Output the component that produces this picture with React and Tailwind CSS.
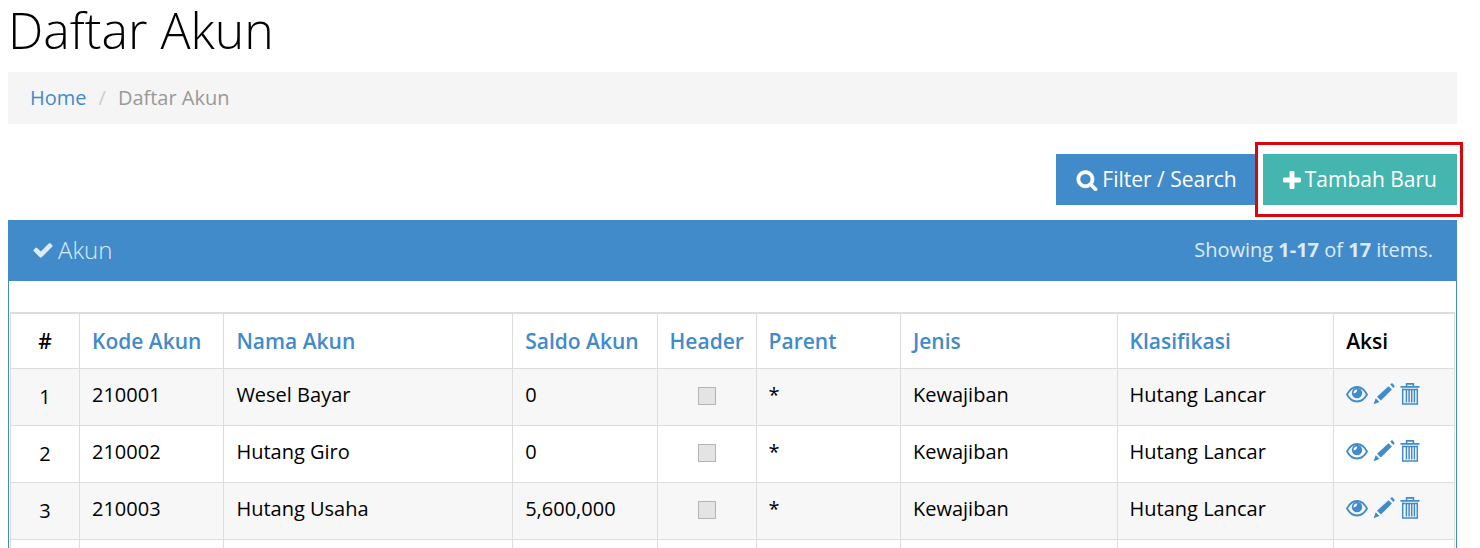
const columns = [
  { key: "kode", label: "Kode Akun" },
  { key: "nama", label: "Nama Akun" },
  { key: "saldo", label: "Saldo Akun" },
  { key: "header", label: "Header" },
  { key: "parent", label: "Parent" },
  { key: "jenis", label: "Jenis" },
  { key: "klasifikasi", label: "Klasifikasi" },
];

const accounts = [
  { kode: "210001", nama: "Wesel Bayar", saldo: "0", parent: "*", jenis: "Kewajiban", klasifikasi: "Hutang Lancar" },
  { kode: "210002", nama: "Hutang Giro", saldo: "0", parent: "*", jenis: "Kewajiban", klasifikasi: "Hutang Lancar" },
  { kode: "210003", nama: "Hutang Usaha", saldo: "5,600,000", parent: "*", jenis: "Kewajiban", klasifikasi: "Hutang Lancar" },
];

export default function App() {
  return (
    <div className="h-screen overflow-hidden bg-white pr-[23px] pl-2 font-['Open_Sans','Noto_Sans',sans-serif] text-xl text-black">
      <h1 className="pb-3 text-[50px] leading-[60px] font-light text-black">Daftar Akun</h1>

      <nav aria-label="Breadcrumb" className="bg-[#f5f5f5] px-[22px] py-3">
        <ol className="flex leading-7">
          <li>
            <a href="#home" className="text-[#428bca]">Home</a>
          </li>
          <li aria-hidden="true" className="px-3 text-[#ccc]">/</li>
          <li className="text-[#999]">Daftar Akun</li>
        </ol>
      </nav>

      <div className="flex justify-end gap-[6px] pt-[30px] pb-[15px]">
        <button type="button" className="flex items-center gap-1 bg-[#428bca] px-5 py-[10px] text-[21px] leading-[31px] text-white">
          <SearchIcon /> Filter / Search
        </button>
        <div className="relative">
          <button type="button" className="flex items-center gap-1 bg-[#45b6af] px-5 py-[10px] text-[21px] leading-[31px] text-white">
            <PlusIcon /> Tambah Baru
          </button>
          <span className="pointer-events-none absolute -inset-y-3 -right-[6px] -left-2 border-3 border-[#d9060c]" />
        </div>
      </div>

      <section className="border border-[#428bca]">
        <header className="flex items-center justify-between bg-[#428bca] px-[23px] pt-[13px] pb-[15px] leading-8 text-[#dcebf8]">
          <h2 className="flex items-center gap-1 text-2xl leading-8 font-light">
            <CheckIcon /> Akun
          </h2>
          <p>
            Showing <b>1-17</b> of <b>17</b> items.
          </p>
        </header>

        <div className="px-px pt-[31px]">
          <table className="w-full table-fixed border-collapse text-left leading-7">
            <colgroup>
              <col className="w-[69px]" />
              <col className="w-[10%]" />
              <col className="w-[20%]" />
              <col className="w-[10%]" />
              <col className="w-[99px]" />
              <col className="w-[10%]" />
              <col className="w-[15%]" />
              <col className="w-[15%]" />
              <col />
            </colgroup>
            <thead className="text-[21px]">
              <tr>
                <th className="border border-t-2 border-[#ddd] py-[13px] text-center font-semibold">#</th>
                {columns.map((column) => (
                  <th key={column.key} className="border border-t-2 border-[#ddd] px-3 py-[13px] font-semibold whitespace-nowrap">
                    <a href={`#${column.key}`} className="text-[#428bca]">{column.label}</a>
                  </th>
                ))}
                <th className="border border-t-2 border-[#ddd] px-3 py-[13px] font-semibold">Aksi</th>
              </tr>
            </thead>
            <tbody>
              {accounts.map((account, idx) => (
                <AccountRow key={account.kode} account={account} number={idx + 1} />
              ))}
              <tr className="h-14">
                {[...Array(9)].map((_, idx) => (
                  <td key={idx} className="border border-[#ddd]" />
                ))}
              </tr>
            </tbody>
          </table>
        </div>
      </section>
    </div>
  );
}

function AccountRow({ account, number }) {
  return (
    <tr className="align-top odd:bg-[#f7f7f7]">
      <td className="border border-[#ddd] py-[14px] text-center">{number}</td>
      <Cell>{account.kode}</Cell>
      <Cell>{account.nama}</Cell>
      <Cell>{account.saldo}</Cell>
      <td className="border border-[#ddd] py-[18px]">
        <input
          type="checkbox"
          disabled
          aria-label={`Header ${account.nama}`}
          className="mx-auto block size-[18px] appearance-none border border-[#b4b4b4] bg-[#e4e4e4]"
        />
      </td>
      <Cell>{account.parent}</Cell>
      <Cell>{account.jenis}</Cell>
      <Cell>{account.klasifikasi}</Cell>
      <td className="border border-[#ddd] px-3 py-[13px] text-[#428bca]">
        <div className="flex gap-[5px]">
          <a href="#view" aria-label={`View ${account.nama}`}><EyeIcon /></a>
          <a href="#update" aria-label={`Update ${account.nama}`}><PencilIcon /></a>
          <a href="#delete" aria-label={`Delete ${account.nama}`}><TrashIcon /></a>
        </div>
      </td>
    </tr>
  );
}

function Cell({ children }) {
  return <td className="border border-[#ddd] px-3 pt-3 pb-4 whitespace-nowrap">{children}</td>;
}

function SearchIcon() {
  return (
    <svg viewBox="0 0 1792 1792" className="size-[22px]" fill="currentColor" stroke="currentColor" strokeWidth="50" aria-hidden="true">
      <path d="M1216 832q0-185-131.5-316.5t-316.5-131.5-316.5 131.5-131.5 316.5 131.5 316.5 316.5 131.5 316.5-131.5 131.5-316.5zm512 832q0 52-38 90t-90 38q-54 0-90-38l-343-342q-179 124-399 124-143 0-273.5-55.5t-225-150-150-225-55.5-273.5 55.5-273.5 150-225 225-150 273.5-55.5 273.5 55.5 225 150 150 225 55.5 273.5q0 220-124 399l343 343q37 37 37 90z" />
    </svg>
  );
}

function PlusIcon() {
  return (
    <svg viewBox="192 128 1408 1408" className="size-[18px]" fill="currentColor" aria-hidden="true">
      <path d="M1600 736v192q0 40-28 68t-68 28h-416v416q0 40-28 68t-68 28h-192q-40 0-68-28t-28-68v-416h-416q-40 0-68-28t-28-68v-192q0-40 28-68t68-28h416v-416q0-40 28-68t68-28h192q40 0 68 28t28 68v416h416q40 0 68 28t28 68z" />
    </svg>
  );
}

function CheckIcon() {
  return (
    <svg viewBox="0 0 1792 1792" className="size-[22px]" fill="currentColor" aria-hidden="true">
      <path d="M1671 566q0 40-28 68l-724 724-136 136q-28 28-68 28t-68-28l-136-136-362-362q-28-28-28-68t28-68l136-136q28-28 68-28t68 28l294 295 656-657q28-28 68-28t68 28l136 136q28 28 28 68z" />
    </svg>
  );
}

function EyeIcon() {
  return (
    <svg viewBox="0 0 22 24" className="h-6 w-[22px]" aria-hidden="true">
      <path d="M1 12.5C3.4 7.800 7 5 11 5s7.600 2.800 10 7.500c-2.400 4.400-6 7-10 7S3.400 16.900 1 12.500Z" fill="none" stroke="currentColor" strokeWidth="1.800" />
      <circle cx="11" cy="11" r="5.200" fill="currentColor" />
      <path d="M7.400 11.200c.1-2.300 1.500-3.700 3.900-3.800-.2 2.400-1.400 3.700-3.900 3.800Z" fill="#fff" />
    </svg>
  );
}

function PencilIcon() {
  return (
    <svg viewBox="0 0 22 24" className="h-6 w-[22px]" fill="currentColor" aria-hidden="true">
      <path d="M17.200 2.600l1.200-1.100c.5-.3 1-.2 1.400.2l1.500 1.700c.4.4.4 1 .1 1.400l-1 1.200ZM15.500 4.200l3.400 3.400L7.900 18.600l-3.900-3.900ZM2.700 16.300l3.800 3.800L.6 22.300Z" />
    </svg>
  );
}

function TrashIcon() {
  return (
    <svg viewBox="0 0 20 24" className="h-6 w-5" aria-hidden="true">
      <path d="M.5 4.900h19M6.600 4V1.900h6.800V4" fill="none" stroke="currentColor" strokeWidth="1.600" />
      <path d="M2.700 6.500v15.600h14.600V6.500M6.400 7.500v13M9.100 7.500v13M11.700 7.500v13M14.400 7.500v13M2 7.500h16" fill="none" stroke="currentColor" strokeWidth="1.500" />
    </svg>
  );
}
